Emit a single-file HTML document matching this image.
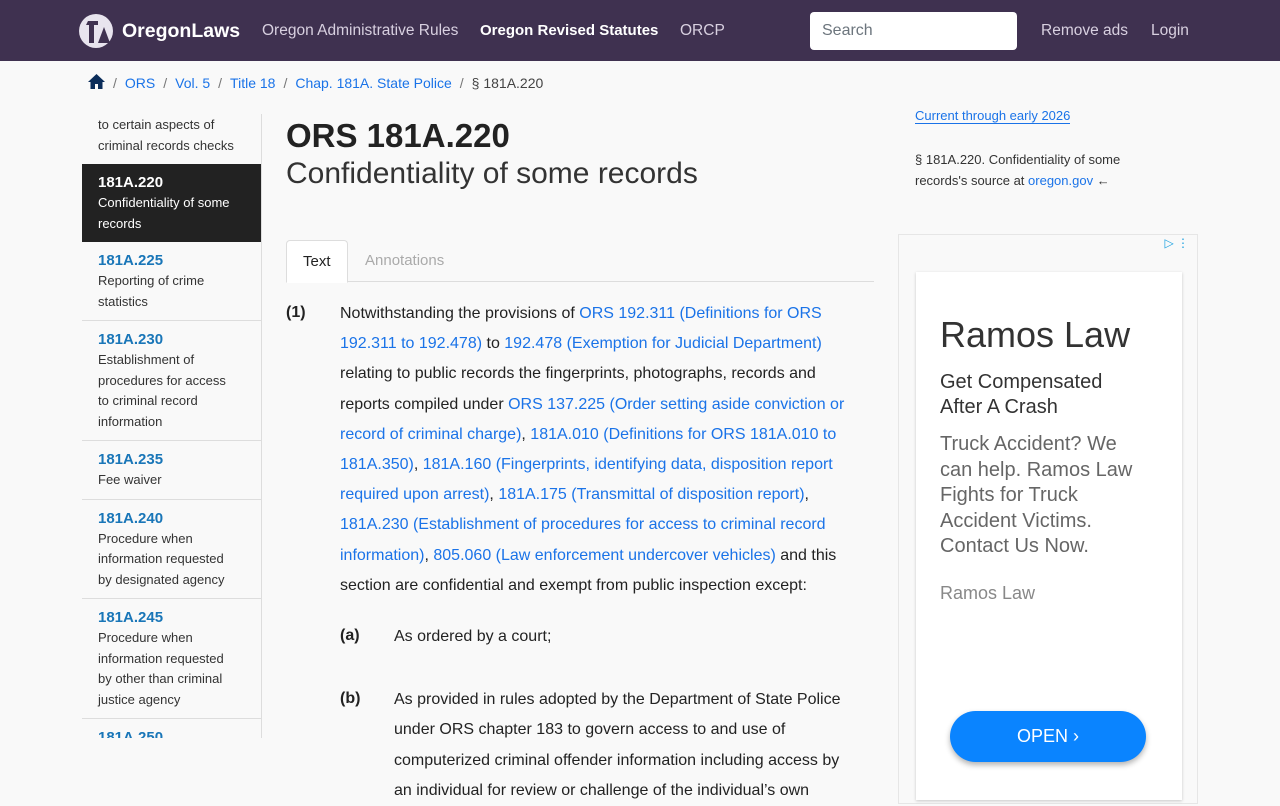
<!DOCTYPE html>
<html><head><meta charset="utf-8"><style>
*{box-sizing:border-box;margin:0;padding:0}
body{width:1280px;height:800px;overflow:hidden;background:#f9f9f9;font-family:"Liberation Sans",sans-serif;color:#212529;position:relative}
a{color:#1a73e8;text-decoration:none}
.nav{height:61px;background:#3f3150;position:relative;color:#ddd6e6}
.nav .logo{position:absolute;left:78px;top:13px}
.nav .brand{position:absolute;left:122px;top:20px;font-size:19.5px;font-weight:bold;color:#fff}
.nav .l{position:absolute;top:22px;font-size:15.5px;color:#d8d0e0}
.search{position:absolute;left:810px;top:12px;width:207px;height:38px;background:#fff;border-radius:4px;color:#6c757d;font-size:16px;padding:10px 12px}
.bc{position:absolute;top:74px;left:88px;font-size:14px;color:#444}
.bc a{color:#1a73e8}
.bc span{margin:0 8px;color:#777}
.side{position:absolute;left:82px;top:114px;width:180px;height:624px;overflow:hidden;border-right:1px solid #ddd}
.it{padding:8px 16px 8px;font-size:13px;line-height:20.5px;color:#333;border-bottom:1px solid #ddd;white-space:nowrap}
.it b{display:block;color:#1976b8;font-size:15px;line-height:21px}
.it.act{background:#222;color:#fff;border-bottom:none}
.it.act b{color:#fff}
h1{position:absolute;left:286px;top:117px;font-size:33px;font-weight:bold;color:#222}
h2{position:absolute;left:286px;top:157px;font-size:30px;font-weight:normal;color:#333}
.tabs{position:absolute;left:286px;top:240px;width:588px;height:42px;border-bottom:1px solid #ddd}
.tab{position:absolute;top:0;height:43px;padding:12px 16px;font-size:15px}
.t1{left:0;background:#fff;border:1px solid #ddd;border-bottom-color:#fff;border-radius:4px 4px 0 0;color:#222}
.t2{left:62px;color:#aaa}
.body{position:absolute;left:286px;top:298px;width:600px;font-size:16px;line-height:30.2px;color:#222;white-space:nowrap}
.n{position:absolute;font-weight:bold}
.right{position:absolute;left:915px;font-size:13px;line-height:21px;color:#333}
.ad{position:absolute;left:898px;top:234px;width:300px;height:570px;border:1px solid #e6e6e6;background:#f9f9f9}
.card{position:absolute;left:17px;top:37px;width:266px;height:528px;background:#fff;box-shadow:0 1px 3px rgba(0,0,0,.2)}
.open{position:absolute;left:34px;top:439px;width:196px;height:51px;border-radius:26px;background:#0a84ff;color:#fff;font-size:18px;text-align:center;line-height:51px;box-shadow:0 3px 6px rgba(0,0,0,.3)}
</style></head><body>
<div class="nav">
<svg class="logo" width="36" height="36" viewBox="0 0 36 36"><circle cx="18" cy="18" r="17" fill="#e8e4ee"/><path d="M10 8h10v4h-4v18h-5V12H8z M20 30l6-16 6 16z" fill="#3f3150"/></svg>
<div class="brand">OregonLaws</div>
<div class="l" style="left:262px">Oregon Administrative Rules</div>
<div class="l" style="left:480px;font-weight:bold;color:#fff;font-size:15px">Oregon Revised Statutes</div>
<div class="l" style="left:680px">ORCP</div>
<div class="search">Search</div>
<div class="l" style="left:1041px">Remove ads</div>
<div class="l" style="left:1151px">Login</div>
</div>
<div class="bc"><svg width="17" height="15" viewBox="0 0 17 15" style="vertical-align:-1px"><path d="M8.5 0L0 8h2.5v7h4.5v-5h3v5h4.5V8H17z" fill="#0b2d5a"/></svg><span>/</span><a>ORS</a><span>/</span><a>Vol. 5</a><span>/</span><a>Title 18</a><span>/</span><a>Chap. 181A. State Police</a><span>/</span>§ 181A.220</div>
<div class="side">
<div class="it" style="padding-top:1px;border-bottom:none">to certain aspects of<br>criminal records checks</div>
<div class="it act"><b>181A.220</b>Confidentiality of some<br>records</div>
<div class="it"><b>181A.225</b>Reporting of crime<br>statistics</div>
<div class="it"><b>181A.230</b>Establishment of<br>procedures for access<br>to criminal record<br>information</div>
<div class="it"><b>181A.235</b>Fee waiver</div>
<div class="it"><b>181A.240</b>Procedure when<br>information requested<br>by designated agency</div>
<div class="it"><b>181A.245</b>Procedure when<br>information requested<br>by other than criminal<br>justice agency</div>
<div class="it"><b>181A.250</b>x</div>
</div>
<h1>ORS 181A.220</h1>
<h2>Confidentiality of some records</h2>
<div class="tabs"><div class="tab t1">Text</div><div class="tab t2" style="left:63px">Annotations</div></div>
<div class="body">
<div class="n" style="left:0;top:0">(1)</div>
<div style="margin-left:54px;padding-top:1px">Notwithstanding the provisions of <a>ORS 192.311 (Definitions for ORS</a><br><a>192.311 to 192.478)</a> to <a>192.478 (Exemption for Judicial Department)</a><br>relating to public records the fingerprints, photographs, records and<br>reports compiled under <a>ORS 137.225 (Order setting aside conviction or</a><br><a>record of criminal charge)</a>, <a>181A.010 (Definitions for ORS 181A.010 to</a><br><a>181A.350)</a>, <a>181A.160 (Fingerprints, identifying data, disposition report</a><br><a>required upon arrest)</a>, <a>181A.175 (Transmittal of disposition report)</a>,<br><a>181A.230 (Establishment of procedures for access to criminal record</a><br><a>information)</a>, <a>805.060 (Law enforcement undercover vehicles)</a> and this<br>section are confidential and exempt from public inspection except:</div>
<div class="n" style="left:54px;top:323px">(a)</div>
<div style="margin-left:108px;margin-top:21px">As ordered by a court;</div>
<div class="n" style="left:54px;top:386px">(b)</div>
<div style="margin-left:108px;margin-top:33px">As provided in rules adopted by the Department of State Police<br>under ORS chapter 183 to govern access to and use of<br>computerized criminal offender information including access by<br>an individual for review or challenge of the individual’s own</div>
</div>
<div class="right" style="top:105px"><a style="border-bottom:1px solid #1a73e8">Current through early 2026</a></div>
<div class="right" style="top:149px">§ 181A.220. Confidentiality of some<br>records's source at <a>oregon.gov</a> ←</div>
<div class="ad">
<div style="position:absolute;right:8px;top:1px;color:#1aa0e0;font-size:12px">▷ ⋮</div>
<div class="card">
<div style="position:absolute;left:24px;top:42px;font-size:36px;color:#333">Ramos Law</div>
<div style="position:absolute;left:24px;top:98px;font-size:20px;line-height:25px;color:#333;white-space:nowrap">Get Compensated<br>After A Crash</div>
<div style="position:absolute;left:24px;top:160px;font-size:20px;line-height:25.5px;color:#666;white-space:nowrap">Truck Accident? We<br>can help. Ramos Law<br>Fights for Truck<br>Accident Victims.<br>Contact Us Now.</div>
<div style="position:absolute;left:24px;top:311px;font-size:18px;color:#888">Ramos Law</div>
<div class="open">OPEN ›</div>
</div></div>
</body></html>
